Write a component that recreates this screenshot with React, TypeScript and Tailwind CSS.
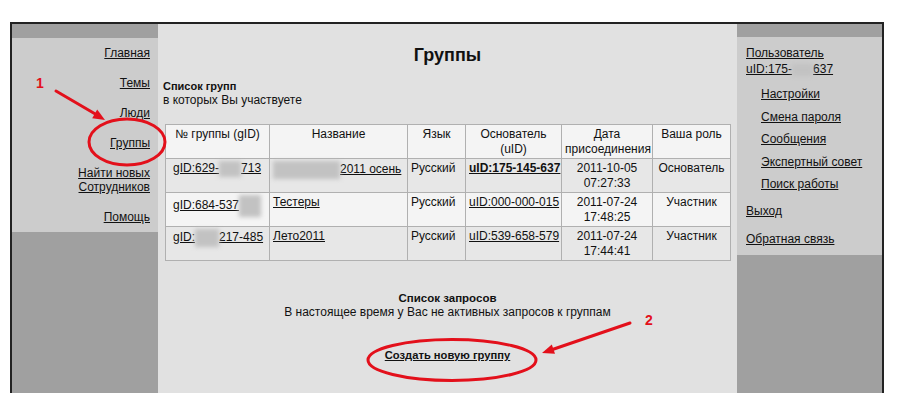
import React from 'react';

const Blur: React.FC<{ w: string; h?: string }> = ({ w, h = 'h-[16px]' }) => (
  <span className={`inline-block ${w} ${h} align-middle bg-[#c2c2c2] blur-[2px]`} />
);

const leftNav = [
  { label: 'Главная' },
  { label: 'Темы' },
  { label: 'Люди' },
  { label: 'Группы' },
  { label: 'Найти новых\nСотрудников' },
  { label: 'Помощь' },
];

const App: React.FC = () => {
  const rows = [
    {
      gid: (
        <>
          gID:629-<Blur w="w-[22px]" />713
        </>
      ),
      name: (
        <>
          <Blur w="w-[67px]" h="h-[18px]" />2011 осень
        </>
      ),
      founder: 'uID:175-145-637',
      bold: true,
      date: ['2011-10-05', '07:27:33'],
      role: 'Основатель',
      bg: 'bg-[#e7e7e7]',
    },
    {
      gid: (
        <>
          gID:684-537<Blur w="w-[22px]" h="h-[22px]" />
        </>
      ),
      name: 'Тестеры',
      founder: 'uID:000-000-015',
      bold: false,
      date: ['2011-07-24', '17:48:25'],
      role: 'Участник',
      bg: 'bg-[#f4f4f4]',
    },
    {
      gid: (
        <>
          gID:<Blur w="w-[24px]" h="h-[18px]" />217-485
        </>
      ),
      name: 'Лето2011',
      founder: 'uID:539-658-579',
      bold: false,
      date: ['2011-07-24', '17:44:41'],
      role: 'Участник',
      bg: 'bg-[#e7e7e7]',
    },
  ];

  const td = 'border border-[#b0b0b0] px-[3px] py-[2px] align-top leading-[14.5px]';

  return (
    <div className="relative h-[393px] overflow-hidden bg-white font-['Liberation_Sans',Arial,sans-serif] text-[12px] text-[#111]">
      <div className="ml-[10px] mt-[22px] flex h-[420px] w-[874px] border-2 border-b-0 border-[#222]">
        {/* left menu */}
        <aside className="w-[146px] bg-[#a0a0a0] pt-[14px]">
          <nav className="bg-[#cccccc] pr-[8px] text-right">
            {leftNav.map((item) => (
              <a key={item.label} href="#" className="block whitespace-pre-line py-[8px] leading-[14px] underline">
                {item.label}
              </a>
            ))}
          </nav>
        </aside>

        {/* content */}
        <main className="w-[579px] bg-[#e1e1e1]">
          <h1 className="pt-[20px] text-center text-[18px] font-bold leading-[22px]">Группы</h1>
          <div className="mt-[13px] pl-[5px] leading-[14px]">
            <div className="text-[11px] font-bold">Список групп</div>
            <div>в которых Вы участвуете</div>
          </div>
          <table className="ml-[7px] mt-[17px] w-[565px] table-fixed border-collapse">
            <colgroup>
              <col className="w-[104px]" />
              <col className="w-[138px]" />
              <col className="w-[58px]" />
              <col className="w-[96px]" />
              <col className="w-[91px]" />
              <col className="w-[78px]" />
            </colgroup>
            <thead className="bg-[#f4f4f4]">
              <tr>
                <th className={`${td} h-[34px] text-center font-normal`}>№ группы (gID)</th>
                <th className={`${td} text-center font-normal`}>Название</th>
                <th className={`${td} text-center font-normal`}>Язык</th>
                <th className={`${td} text-center font-normal`}>
                  Основатель
                  <br />
                  (uID)
                </th>
                <th className={`${td} text-center font-normal`}>
                  Дата
                  <br />
                  присоединения
                </th>
                <th className={`${td} text-center font-normal`}>Ваша роль</th>
              </tr>
            </thead>
            <tbody>
              {rows.map((row, index) => (
                <tr key={index} className={row.bg}>
                  <td className={`${td} h-[34px] whitespace-nowrap !pl-[7px]`}>
                    <a href="#" className="underline">{row.gid}</a>
                  </td>
                  <td className={`${td} whitespace-nowrap`}>
                    <a href="#" className="underline">{row.name}</a>
                  </td>
                  <td className={td}>Русский</td>
                  <td className={`${td} whitespace-nowrap`}>
                    <a href="#" className={row.bold ? 'font-bold underline' : 'underline'}>{row.founder}</a>
                  </td>
                  <td className={`${td} text-center`}>
                    {row.date[0]}
                    <br />
                    {row.date[1]}
                  </td>
                  <td className={`${td} text-center`}>{row.role}</td>
                </tr>
              ))}
            </tbody>
          </table>

          <div className="mt-[30px] text-center leading-[14px]">
            <div className="text-[11.5px] font-bold">Список запросов</div>
            <div>В настоящее время у Вас не активных запросов к группам</div>
            <a href="#" className="mt-[29px] inline-block text-[11.2px] font-bold underline">Создать новую группу</a>
          </div>
        </main>

        {/* user menu */}
        <aside className="w-[145px] bg-[#a0a0a0] pt-[13px]">
          <div className="bg-[#cccccc] pb-[9px] pl-[9px] pt-[8px] leading-[14px]">
            <a href="#" className="block leading-[16px] underline">
              Пользователь
              <br />
              uID:175-<Blur w="w-[21px]" h="h-[12px]" />637
            </a>
            <div className="ml-[15px] mt-[10px] flex flex-col gap-[8.5px]">
              <a href="#" className="underline">Настройки</a>
              <a href="#" className="underline">Смена пароля</a>
              <a href="#" className="underline">Сообщения</a>
              <a href="#" className="underline">Экспертный совет</a>
              <a href="#" className="underline">Поиск работы</a>
            </div>
            <a href="#" className="mt-[13px] block underline">Выход</a>
            <a href="#" className="mt-[14px] block underline">Обратная связь</a>
          </div>
        </aside>
      </div>

      {/* annotations */}
      <svg className="pointer-events-none absolute left-0 top-0" width="900" height="393" viewBox="0 0 900 393">
        <text x="40" y="88" textAnchor="middle" fill="#e3101b" fontSize="14" fontWeight="bold" fontFamily="Liberation Sans, Arial, sans-serif">
          1
        </text>
        <line x1="56" y1="91" x2="97" y2="115" stroke="#e3101b" strokeWidth="3" strokeLinecap="round" />
        <polygon points="105,120 92.2,118.2 97.2,109.6" fill="#e3101b" />
        <ellipse cx="127" cy="142" rx="38" ry="23" fill="none" stroke="#e3101b" strokeWidth="3" />

        <text x="649" y="325" textAnchor="middle" fill="#e3101b" fontSize="14" fontWeight="bold" fontFamily="Liberation Sans, Arial, sans-serif">
          2
        </text>
        <line x1="630" y1="323" x2="551" y2="350" stroke="#e3101b" strokeWidth="3" strokeLinecap="round" />
        <polygon points="542,353 551.8,344.4 555,353.8" fill="#e3101b" />
        <ellipse cx="452" cy="360" rx="84" ry="20.5" fill="none" stroke="#e3101b" strokeWidth="3" />
      </svg>
    </div>
  );
};

export default App;
